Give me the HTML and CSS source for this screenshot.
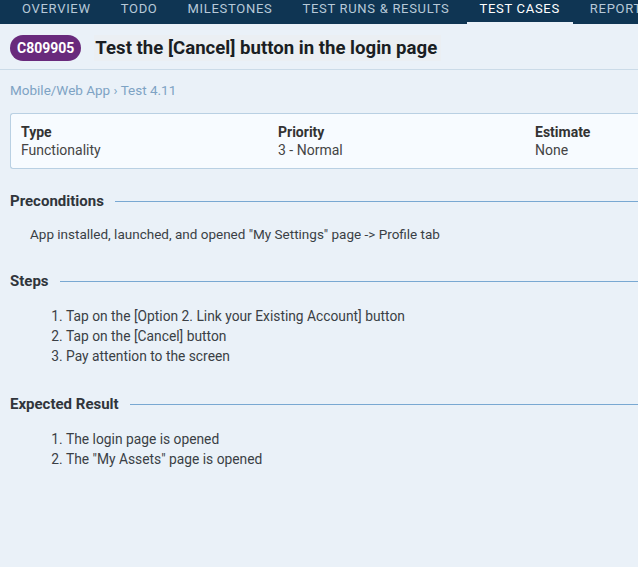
FILE: index.html
```html
<!DOCTYPE html>
<html>
<head>
<meta charset="utf-8">
<link rel="stylesheet" href="styles.css">
</head>
<body>
<nav class="nav">
  <a class="nav-item">OVERVIEW</a>
  <a class="nav-item">TODO</a>
  <a class="nav-item">MILESTONES</a>
  <a class="nav-item">TEST RUNS &amp; RESULTS</a>
  <a class="nav-item active">TEST CASES</a>
  <a class="nav-item">REPORT</a>
</nav>
<header class="head">
  <span class="badge">C809905</span>
  <h1 class="title">Test the [Cancel] button in the login page</h1>
</header>
<main class="content">
  <div class="crumbs">Mobile/Web App › Test 4.11</div>
  <div class="info">
    <div class="col"><div class="label">Type</div><div class="value">Functionality</div></div>
    <div class="col"><div class="label">Priority</div><div class="value">3 - Normal</div></div>
    <div class="col last"><div class="label">Estimate</div><div class="value">None</div></div>
  </div>
  <section class="section first">
    <h2 class="sec-title"><span>Preconditions</span></h2>
    <p class="text">App installed, launched, and opened "My Settings" page -&gt; Profile tab</p>
  </section>
  <section class="section">
    <h2 class="sec-title"><span>Steps</span></h2>
    <ol class="list">
      <li>Tap on the [Option 2. Link your Existing Account] button</li>
      <li>Tap on the [Cancel] button</li>
      <li>Pay attention to the screen</li>
    </ol>
  </section>
  <section class="section">
    <h2 class="sec-title"><span>Expected Result</span></h2>
    <ol class="list">
      <li>The login page is opened</li>
      <li>The "My Assets" page is opened</li>
    </ol>
  </section>
</main>
</body>
</html>
```
FILE: styles.css
```css
* { box-sizing: border-box; }
html, body { margin: 0; padding: 0; }
body {
  background: #eaf1f8;
  font-family: Roboto, "Liberation Sans", sans-serif;
  color: #3a3f45;
  width: 638px;
  overflow: hidden;
}
.nav {
  display: flex;
  background: #0f3553;
  height: 24px;
  padding-left: 22px;
  gap: 30px;
  white-space: nowrap;
  overflow: hidden;
}
.nav-item {
  color: #b7c9d8;
  font-size: 13px;
  letter-spacing: 0.7px;
  line-height: 17px;
  position: relative;
  height: 24px;
}
.nav-item.active { color: #ffffff; }
.nav-item.active::after {
  content: "";
  position: absolute;
  left: -12px;
  right: -13px;
  bottom: -1px;
  height: 3px;
  background: #eaf1f8;
}
.head {
  display: flex;
  align-items: center;
  gap: 13px;
  padding: 11px 10px 8px;
  border-bottom: 1px solid #cbdbe8;
  height: 46px;
}
.badge {
  background: #692a7c;
  color: #fff;
  font-weight: 700;
  font-size: 14px;
  border-radius: 13px;
  padding: 0 7px;
  height: 26px;
  line-height: 26px;
}
.title {
  margin: 0;
  font-size: 18.6px;
  font-weight: 700;
  color: #1a1e23;
  background: #ebeff3;
  padding: 0 4px 0 1px;
  line-height: 26px;
}
.content { padding: 11px 0 0 10px; }
.crumbs {
  color: #7ea3c4;
  font-size: 13.5px;
  line-height: 18px;
}
.info {
  display: flex;
  margin-top: 14px;
  background: #f7fbff;
  border: 1px solid #b9d0e3;
  border-right: none;
  border-radius: 3px 0 0 3px;
  padding: 9px 0 9px 10px;
  height: 56px;
}
.col { width: 257px; flex: none; }
.col.last { flex: 1; width: auto; }
.label { font-weight: 700; font-size: 14px; color: #333; line-height: 18px; }
.value { font-size: 14px; color: #444; line-height: 19px; }
.section { margin-top: 28px; }
.section.first { margin-top: 22px; }
.sec-title {
  margin: 0;
  display: flex;
  align-items: center;
  font-size: 15px;
  font-weight: 700;
  color: #30353b;
  line-height: 20px;
}
.sec-title::after {
  content: "";
  flex: 1;
  height: 1px;
  background: #79a8d2;
  margin-left: 11px;
}
.text {
  margin: 14px 0 0 20px;
  font-size: 13.5px;
  line-height: 18px;
}
.list {
  margin: 15px 0 0 0;
  padding-left: 56px;
  font-size: 13.8px;
  line-height: 20px;
}
```
